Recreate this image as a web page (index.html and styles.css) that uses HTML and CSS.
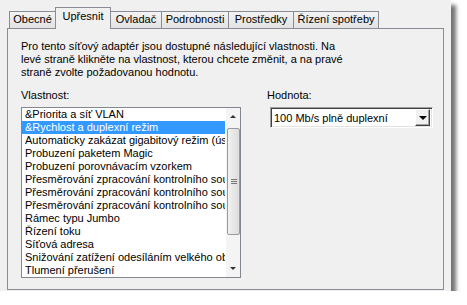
FILE: index.html
```html
<!DOCTYPE html>
<html lang="cs">
<head>
  <meta charset="UTF-8">
  <title>Vlastnosti adaptéru</title>
  <link rel="stylesheet" href="styles.css">
</head>
<body>
  <div class="dialog">
    <div class="tabs">
      <div class="tab tab-obecne">Obecné</div>
      <div class="tab tab-active tab-upresnit">Upřesnit</div>
      <div class="tab tab-ovladac">Ovladač</div>
      <div class="tab tab-podrobnosti">Podrobnosti</div>
      <div class="tab tab-prostredky">Prostředky</div>
      <div class="tab tab-rizeni">Řízení spotřeby</div>
    </div>
    <div class="panel">
      <p class="intro">Pro tento síťový adaptér jsou dostupné následující vlastnosti. Na<br>levé straně klikněte na vlastnost, kterou chcete změnit, a na pravé<br>straně zvolte požadovanou hodnotu.</p>
      <div class="fields">
        <div class="col-left">
          <div class="label">Vlastnost:</div>
          <div class="listbox">
            <ul class="items">
              <li>&amp;Priorita a síť VLAN</li>
              <li class="selected">&amp;Rychlost a duplexní režim</li>
              <li>Automaticky zakázat gigabitový režim (úsp</li>
              <li>Probuzení paketem Magic</li>
              <li>Probuzení porovnávacím vzorkem</li>
              <li>Přesměrování zpracování kontrolního sou</li>
              <li>Přesměrování zpracování kontrolního sou</li>
              <li>Přesměrování zpracování kontrolního sou</li>
              <li>Rámec typu Jumbo</li>
              <li>Řízení toku</li>
              <li>Síťová adresa</li>
              <li>Snižování zatížení odesíláním velkého ob</li>
              <li>Tlumení přerušení</li>
            </ul>
            <div class="scrollbar">
              <div class="sb-arrow"><span class="tri-up"></span></div>
              <div class="sb-track">
                <div class="sb-thumb"><span class="grip"></span></div>
              </div>
              <div class="sb-arrow"><span class="tri-down"></span></div>
            </div>
          </div>
        </div>
        <div class="col-right">
          <div class="label">Hodnota:</div>
          <div class="combo">
            <span class="combo-text">100 Mb/s plně duplexní</span>
            <span class="combo-btn"><span class="tri-down"></span></span>
          </div>
        </div>
      </div>
    </div>
  </div>
</body>
</html>
```

FILE: styles.css
```css
body {
  margin: 0;
  background: #fff;
  font-family: "Liberation Sans", Arial, sans-serif;
  font-size: 11px;
  color: #000;
}

.dialog {
  width: 451px;
  height: 291px;
  background: #f0f0f0;
  box-shadow: 5px 5px 4px rgba(0, 0, 0, 0.55);
}

/* tab strip */
.tabs {
  display: flex;
  align-items: flex-end;
  padding: 7px 0 0 9px;
  height: 21px;
}

.tab {
  box-sizing: border-box;
  height: 17px;
  line-height: 15px;
  text-align: center;
  border: 1px solid #898c95;
  border-bottom: none;
  background: linear-gradient(#f3f3f3, #e2e2e2);
  margin-left: -1px;
}

.tab-active {
  position: relative;
  z-index: 1;
  height: 22px;
  margin-bottom: -1px;
  padding-top: 2px;
  line-height: 13px;
  background: #f0f0f0;
}

.tab-obecne { width: 47px; margin-left: 0; }
.tab-upresnit { width: 56px; }
.tab-ovladac { width: 52px; }
.tab-podrobnosti { width: 68px; }
.tab-prostredky { width: 66px; }
.tab-rizeni { width: 86px; }

/* page */
.panel {
  box-sizing: border-box;
  margin-left: 7px;
  width: 437px;
  height: 262px;
  border: 1px solid #898c95;
  padding: 11px 0 0 13px;
}

.intro {
  margin: 0;
  line-height: 13px;
}

.fields {
  display: flex;
  gap: 26px;
  margin-top: 10px;
}

.label {
  line-height: 13px;
  margin-bottom: 5px;
}

.col-left {
  width: 220px;
}

.listbox {
  box-sizing: border-box;
  display: flex;
  height: 171px;
  border: 1px solid #828790;
  background: #fff;
}

.items {
  flex: 1;
  margin: 0;
  padding: 0 1px 0 0;
  list-style: none;
  overflow: hidden;
}

.items li {
  height: 13px;
  line-height: 13px;
  padding-left: 3px;
  white-space: nowrap;
  overflow: hidden;
}

.items .selected {
  background: #3399ff;
  color: #fff;
}

/* scrollbar */
.scrollbar {
  width: 14px;
  display: flex;
  flex-direction: column;
  background: #f4f4f4;
}

.sb-arrow {
  height: 17px;
  display: flex;
  align-items: center;
  justify-content: center;
}

.sb-track {
  flex: 1;
  padding-top: 3px;
}

.sb-thumb {
  box-sizing: border-box;
  height: 107px;
  margin: 0 0 0 1px;
  width: 13px;
  border: 1px solid #9a9a9a;
  border-radius: 2px;
  background: linear-gradient(90deg, #f2f2f2, #dcdcdc);
  display: flex;
  align-items: center;
  justify-content: center;
}

.grip {
  width: 6px;
  height: 5px;
  border-top: 1px solid #777;
  border-bottom: 1px solid #777;
  box-sizing: border-box;
  position: relative;
}

.grip::after {
  content: "";
  position: absolute;
  left: 0;
  right: 0;
  top: 1px;
  border-top: 1px solid #777;
}

.tri-up,
.tri-down {
  width: 0;
  height: 0;
  border-left: 3px solid transparent;
  border-right: 3px solid transparent;
}

.tri-up {
  border-bottom: 3px solid #333;
}

.tri-down {
  border-top: 3px solid #333;
}

/* combo box */
.col-right {
  width: 166px;
}

.combo {
  box-sizing: border-box;
  display: flex;
  align-items: center;
  margin-left: 3px;
  width: 163px;
  height: 21px;
  border: 1px solid;
  border-color: #a0a0a0 #fff #fff #a0a0a0;
  box-shadow: inset 1px 1px 0 #404040, inset -1px -1px 0 #e3e3e3;
  background: #fff;
  padding: 0 2px 0 3px;
}

.combo-text {
  flex: 1;
  white-space: nowrap;
}

.combo-btn {
  box-sizing: border-box;
  width: 15px;
  height: 17px;
  display: flex;
  align-items: center;
  justify-content: center;
  background: #f0f0f0;
  border: 1px solid;
  border-color: #fff #404040 #404040 #fff;
  box-shadow: inset -1px -1px 0 #a0a0a0;
}

.combo-btn .tri-down {
  border-left-width: 4px;
  border-right-width: 4px;
  border-top-width: 4px;
  border-top-color: #000;
}
```
